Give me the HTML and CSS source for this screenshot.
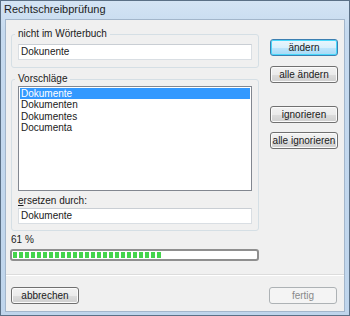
FILE: index.html
```html
<!DOCTYPE html>
<html lang="de">
  <head>
    <meta charset="utf-8">
    <title>Rechtschreibprüfung</title>
    <link rel="stylesheet" href="styles.css">
  </head>
  <body>
    <div class="window">
      <div class="titlebar">Rechtschreibprüfung</div>
      <div class="client">
        <div class="main">
          <div class="left">
            <fieldset class="group group_word">
              <legend>nicht im Wörterbuch</legend>
              <div class="field">Dokunente</div>
            </fieldset>
            <fieldset class="group group_suggest">
              <legend>Vorschläge</legend>
              <ul class="list">
                <li class="selected">Dokumente</li>
                <li>Dokumenten</li>
                <li>Dokumentes</li>
                <li>Documenta</li>
              </ul>
              <div class="replaceLabel"><u>e</u>rsetzen durch:</div>
              <div class="field">Dokumente</div>
            </fieldset>
          </div>
          <div class="sideButtons">
            <button class="btn btn_focus" type="button">ändern</button>
            <button class="btn" type="button">alle ändern</button>
            <button class="btn btn_ignore" type="button">ignorieren</button>
            <button class="btn" type="button">alle ignorieren</button>
          </div>
        </div>
        <div class="progressLabel">61 %</div>
        <div class="progress">
          <div class="progressFill" style="width: 61%"></div>
        </div>
        <div class="footer">
          <button class="btn" type="button">abbrechen</button>
          <button class="btn" type="button" disabled>fertig</button>
        </div>
      </div>
    </div>
  </body>
</html>
```

FILE: styles.css
```css
body {
  margin: 0;
  background-color: #ffffff;
  font-family: "Liberation Sans", Arial, sans-serif;
  font-size: 10px;
  color: #1a1a1a;
}
.window {
  width: 350px;
  height: 316px;
  box-sizing: border-box;
  border: 1px solid #5b7086;
  padding: 0 4px 3px 4px;
  background: linear-gradient(#d4e4f4, #c6daef 30px, #bfd5ec);
  display: flex;
  flex-direction: column;
}
.titlebar {
  height: 18px;
  line-height: 17px;
  margin-left: -4px;
  margin-right: -4px;
  padding-left: 3px;
  font-size: 11px;
  color: #1c1c1c;
}
.client {
  flex: 1;
  border: 1px solid #a3b6cb;
  background-color: #f0f0f0;
  display: flex;
  flex-direction: column;
}
.main {
  display: flex;
  flex-direction: row;
  padding-top: 8px;
  padding-left: 5px;
}
.left {
  width: 248px;
  display: flex;
  flex-direction: column;
}
.group {
  margin: 0;
  padding: 4px 6px 7px 6px;
  border: 1px solid #d5dfe5;
  border-radius: 3px;
  min-width: 0;
}
.group legend {
  padding: 0 3px;
  margin-left: -3px;
  line-height: 12px;
}
.group_suggest {
  margin-top: 5px;
  padding-top: 1px;
  padding-bottom: 6px;
}
.field {
  height: 14px;
  line-height: 14px;
  border: 1px solid #d9dee3;
  border-top-color: #c9ced4;
  background-color: #ffffff;
  padding-left: 2px;
}
.list {
  list-style: none;
  margin: 0;
  padding: 1px;
  height: 101px;
  border: 1px solid #828790;
  background-color: #ffffff;
}
.list li {
  line-height: 11.33px;
  padding-left: 1px;
}
.list .selected {
  background-color: #3399ff;
  color: #ffffff;
}
.replaceLabel {
  margin-top: 4px;
  line-height: 12px;
  margin-bottom: 1px;
}
.sideButtons {
  display: flex;
  flex-direction: column;
  margin-left: 11px;
  padding-top: 11px;
}
.btn {
  width: 68px;
  height: 17px;
  padding: 0;
  margin: 0 0 10px 0;
  font-family: "Liberation Sans", Arial, sans-serif;
  font-size: 10px;
  color: #1a1a1a;
  border: 1px solid #707070;
  border-radius: 3px;
  background: linear-gradient(#f2f2f2 0%, #ebebeb 50%, #dddddd 51%, #cfcfcf 100%);
  box-shadow: inset 0 0 0 1px #fbfbfb;
}
.btn_focus {
  border-color: #3c7fb1;
  box-shadow: inset 0 0 0 1px #48d8fb;
  background: linear-gradient(#eaf6fd 0%, #d9f0fc 50%, #bee6fd 51%, #a7d9f5 100%);
}
.btn_ignore {
  margin-top: 13px;
  margin-bottom: 9px;
}
.btn:disabled {
  color: #8a8a8a;
  border-color: #adb2b5;
  background: #f4f4f4;
  box-shadow: none;
}
.progressLabel {
  margin-top: 3px;
  padding-left: 5px;
  line-height: 12px;
}
.progress {
  margin: 3px 0 0 4px;
  width: 243px;
  height: 6px;
  border: 2px solid #8f8f8f;
  border-radius: 3px;
  padding: 1px 1px;
  background-color: #ffffff;
}
.progressFill {
  height: 100%;
  background: repeating-linear-gradient(90deg, #44d44c 0, #44d44c 4px, transparent 4px, transparent 6px);
}
.footer {
  margin-top: 13px;
  border-top: 1px solid #dcdcdc;
  box-shadow: inset 0 1px 0 #ffffff;
  display: flex;
  flex-direction: row;
  justify-content: space-between;
  padding: 12px 7px 0 5px;
  flex: 1;
}
.footer .btn {
  margin: 0;
}
```
